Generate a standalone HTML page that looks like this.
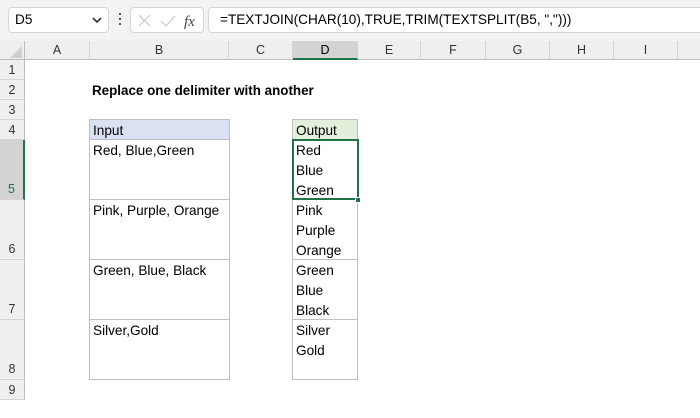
<!DOCTYPE html>
<html><head><style>
*{margin:0;padding:0;box-sizing:border-box}
body{width:700px;height:400px;overflow:hidden;background:#fff;font-family:"Liberation Sans",Calibri,sans-serif;position:relative;font-size:13.6px;color:#000}
.a{position:absolute}
.top{left:0;top:0;width:700px;height:41px;background:#f3f3f3}
.box{background:#fff;border:1px solid #d6d6d6;border-radius:4px}
.ch{top:41px;height:19px;background:#efefef;border-right:1px solid #d4d4d4;border-bottom:1px solid #bdbdbd;text-align:center;line-height:18px;color:#333;font-size:12.5px}
.rh{left:0;width:25px;background:#efefef;border-bottom:1px solid #d4d4d4;border-right:1px solid #bdbdbd;color:#333;font-size:12.5px;text-align:center}
.c{border:1px solid #bfbfbf;padding-left:3px;padding-top:1px;line-height:20px;font-size:13.6px}
</style></head><body>
<div class="a top"></div>
<div class="a box" style="left:8px;top:7px;width:101px;height:26px"></div>
<div class="a" style="left:15px;top:12px;font-size:13.6px">D5</div>
<svg class="a" style="left:92px;top:16px" width="10" height="8"><path d="M1 2 L5 6 L9 2" stroke="#333" stroke-width="1.6" fill="none"/></svg>
<div class="a" style="left:119px;top:13px;width:2px;height:2px;background:#555;box-shadow:0 5px #555,0 10px #555"></div>
<div class="a box" style="left:130px;top:7px;width:74px;height:26px"></div>
<svg class="a" style="left:137px;top:13px" width="60" height="16"><path d="M2 2 L13 13 M13 2 L2 13" stroke="#c8c8c8" stroke-width="1.2"/><path d="M24 8 L29 13 L38 3" stroke="#c8c8c8" stroke-width="1.2" fill="none"/><text x="47" y="13" font-family="Liberation Serif" font-style="italic" font-size="15" fill="#444">fx</text></svg>
<div class="a box" style="left:208px;top:7px;width:500px;height:26px"></div>
<div class="a" style="left:220px;top:12px;font-size:13.6px">=TEXTJOIN(CHAR(10),TRUE,TRIM(TEXTSPLIT(B5, ","))) </div>
<div class="a" style="left:0;top:41px;width:25px;height:19px;background:#efefef;border-right:1px solid #bdbdbd;border-bottom:1px solid #bdbdbd"></div>
<svg class="a" style="left:9px;top:45px" width="14" height="14"><path d="M13 1 L13 13 L1 13Z" fill="#d0d0d0"/></svg>
<div class="a ch" style="left:25px;width:65px">A</div>
<div class="a ch" style="left:90px;width:139px">B</div>
<div class="a ch" style="left:229px;width:64px">C</div>
<div class="a ch" style="left:293px;width:65px;background:#d3d3d3;border-bottom:2px solid #217346;color:#000">D</div>
<div class="a ch" style="left:358px;width:63px">E</div>
<div class="a ch" style="left:421px;width:65px">F</div>
<div class="a ch" style="left:486px;width:64px">G</div>
<div class="a ch" style="left:550px;width:64px">H</div>
<div class="a ch" style="left:614px;width:64px">I</div>
<div class="a ch" style="left:678px;width:30px"></div>
<div class="a rh" style="top:60px;height:20px;line-height:20px">1</div>
<div class="a rh" style="top:80px;height:20px;line-height:20px">2</div>
<div class="a rh" style="top:100px;height:20px;line-height:20px">3</div>
<div class="a rh" style="top:120px;height:20px;line-height:20px">4</div>
<div class="a rh" style="top:140px;height:60px;line-height:98px;background:#d3d3d3;border-right:2px solid #217346;color:#217346">5</div>
<div class="a rh" style="top:200px;height:60px;line-height:98px">6</div>
<div class="a rh" style="top:260px;height:60px;line-height:98px">7</div>
<div class="a rh" style="top:320px;height:60px;line-height:98px">8</div>
<div class="a rh" style="top:380px;height:20px;line-height:20px">9</div>
<div class="a" style="left:92px;top:83px;font-weight:bold;font-size:13.4px">Replace one delimiter with another</div>
<div class="a c" style="left:89px;top:119px;width:141px;height:21px;background:#d9e1f2">Input</div>
<div class="a c" style="left:89px;top:139px;width:141px;height:61px">Red, Blue,Green</div>
<div class="a c" style="left:89px;top:199px;width:141px;height:61px">Pink, Purple, Orange</div>
<div class="a c" style="left:89px;top:259px;width:141px;height:61px">Green, Blue, Black</div>
<div class="a c" style="left:89px;top:319px;width:141px;height:61px">Silver,Gold</div>
<div class="a c" style="left:292px;top:119px;width:66px;height:21px;background:#e2efda">Output</div>
<div class="a c" style="left:292px;top:139px;width:66px;height:61px">Red<br>Blue<br>Green</div>
<div class="a c" style="left:292px;top:199px;width:66px;height:61px">Pink<br>Purple<br>Orange</div>
<div class="a c" style="left:292px;top:259px;width:66px;height:61px">Green<br>Blue<br>Black</div>
<div class="a c" style="left:292px;top:319px;width:66px;height:61px">Silver<br>Gold</div>
<div class="a" style="left:292px;top:139px;width:67px;height:61px;border:2px solid #217346"></div>
<div class="a" style="left:355px;top:197px;width:6px;height:6px;background:#217346;border:1px solid #fff"></div>
</body></html>
